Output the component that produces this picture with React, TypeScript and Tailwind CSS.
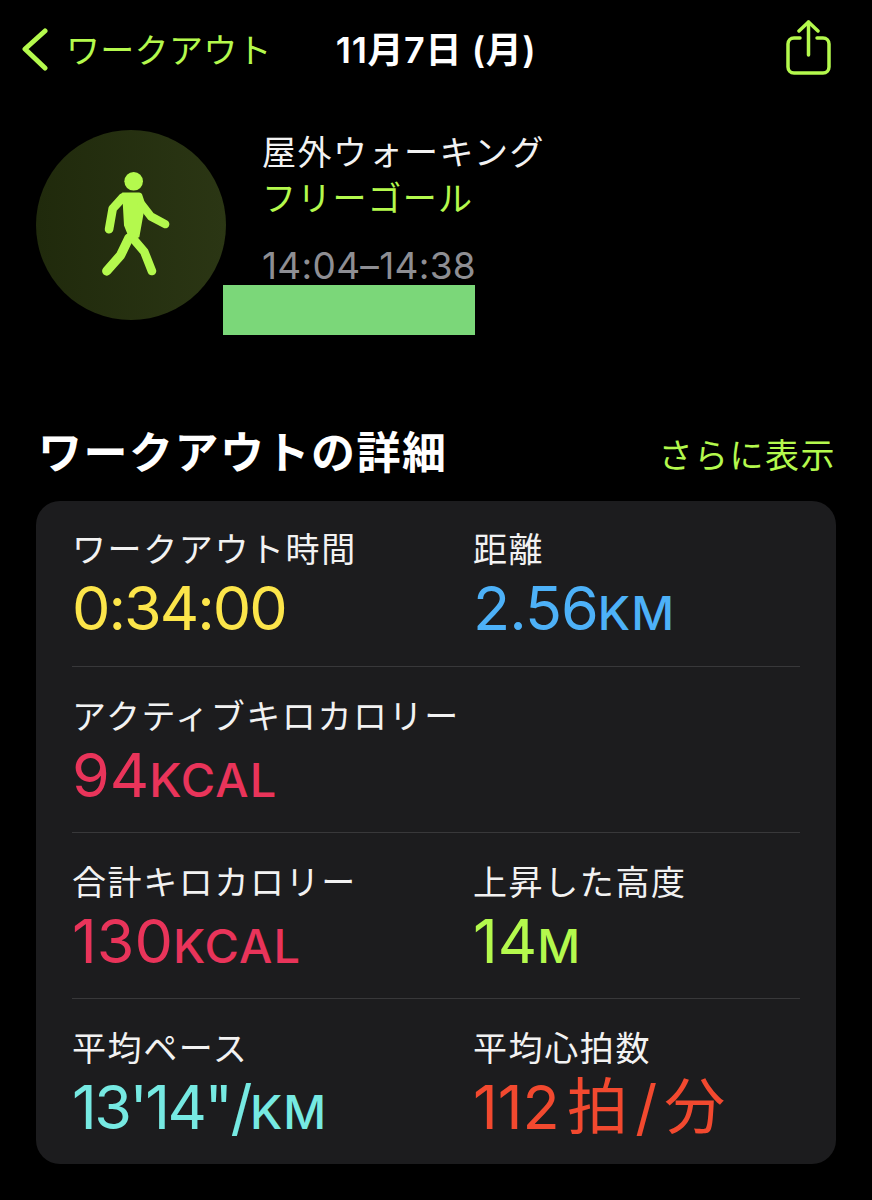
import React from "react";

const LIME = "#b4f94d";

const jp = "[font-family:'Noto_Sans_CJK_JP','Noto_Sans',sans-serif]";
const num = "[font-family:Inter,'Noto_Sans_CJK_JP',sans-serif]";

type Stat = {
  label: string;
  value: string;
  unit?: string;
  color: string;
  valueClass?: string;
};

const rows: Stat[][] = [
  [
    { label: "ワークアウト時間", value: "0:34:00", color: "text-[#fce54a]", valueClass: "tracking-[-2px]" },
    { label: "距離", value: "2.56", unit: "KM", color: "text-[#4db1f8]", valueClass: "tracking-[-1px]" },
  ],
  [{ label: "アクティブキロカロリー", value: "94", unit: "KCAL", color: "text-[#e9345a]" }],
  [
    { label: "合計キロカロリー", value: "130", unit: "KCAL", color: "text-[#e9345a]" },
    { label: "上昇した高度", value: "14", unit: "M", color: "text-[#b4f94d]" },
  ],
  [
    { label: "平均ペース", value: "13'14\"/", unit: "KM", color: "text-[#76e9e2]", valueClass: "tracking-[-2.5px]" },
    { label: "平均心拍数", value: "112 拍 / 分", color: "text-[#f2492f]", valueClass: "[word-spacing:-10px]" },
  ],
];

const WalkerIcon = () => (
  <svg width="80" height="115" viewBox="212 140 240 346" fill="none" stroke={LIME} strokeLinecap="round" strokeLinejoin="round">
    <circle cx="340" cy="180" r="28" fill={LIME} stroke="none" />
    <path d="M306 214h50q8 0 11 10l8 24-18 100-28 10-18-45-4-70-24 15z" fill={LIME} stroke="none" />
    <path d="M308 228 277 262 266 324" strokeWidth="26" />
    <path d="M364 250 392 286 435 309" strokeWidth="25" />
    <path d="M326 350 301 402 259 450" strokeWidth="28" />
    <path d="M338 352 372 392 395 450" strokeWidth="26" />
  </svg>
);

const ShareIcon = () => (
  <svg width="46" height="56" viewBox="0 0 46 56" fill="none" stroke={LIME} strokeWidth="3.500" strokeLinecap="round" strokeLinejoin="round">
    <path d="M14 18H8c-3.500 0-6 2.500-6 6v23c0 3.500 2.500 6 6 6h29c3.500 0 6-2.500 6-6V24c0-3.500-2.500-6-6-6h-6" />
    <path d="M22.500 35V2" />
    <path d="M13 11 22.500 2 32 11" />
  </svg>
);

const StatCell = ({ stat }: { stat: Stat }) => (
  <div className="min-w-0">
    <div className={`${jp} h-[40px] text-[34px] leading-[40px] tracking-[1.6px] whitespace-nowrap text-[#f2f2f2]`}>
      {stat.label}
    </div>
    <div className={`${stat.color} ${num} mt-[10px] h-[60px] leading-[60px] whitespace-nowrap`}>
      <span className={`text-[61px] ${stat.valueClass ?? ""}`}>{stat.value}</span>
      {stat.unit && <span className="text-[47px] font-medium tracking-[1px]">{stat.unit}</span>}
    </div>
  </div>
);

export default function App() {
  return (
    <div className={`${jp} h-[1200px] w-[872px] overflow-hidden bg-black text-white`}>
      {/* nav bar */}
      <div className="flex h-[100px] items-center pl-[22px] pr-[40px]">
        <svg width="26" height="44" viewBox="0 0 26 44" fill="none" stroke={LIME} strokeWidth="5" strokeLinecap="round" strokeLinejoin="round">
          <path d="M23 3 3 21l20 19" />
        </svg>
        <span className="-mt-[3px] ml-[18px] text-[34px] tracking-[0.3px] text-[#b4f94d]">ワークアウト</span>
        <span className={`${num} ml-[64px] text-[36px] leading-none font-semibold tracking-[0.6px]`}>11月7日 (月)</span>
        <div className="-mt-[4px] ml-auto">
          <ShareIcon />
        </div>
      </div>

      {/* workout summary */}
      <div className="relative mt-[30px] flex pl-[36px]">
        <div className="flex h-[190px] w-[190px] items-center justify-center rounded-full bg-gradient-to-r from-[#202a0c] to-[#2b3614]">
          <WalkerIcon />
        </div>
        <div className="ml-[36px]">
          <div className="-mt-[1px] text-[34px] leading-[44px] tracking-[1.500px] text-[#f2f2f2]">屋外ウォーキング</div>
          <div className="mt-[2px] text-[34px] leading-[44px] tracking-[1.2px] text-[#b4f94d]">フリーゴール</div>
          <div className={`${num} mt-[25px] text-[37px] leading-[44px] tracking-[0.3px] text-[#8e8e93]`}>14:04–14:38</div>
        </div>
        <div className="absolute left-[223px] top-[155px] h-[50px] w-[252px] bg-[#7bd779]" />
      </div>

      {/* details */}
      <div className="mt-[103px] flex items-center justify-between pl-[38px] pr-[36px]">
        <h2 className="text-[44px] leading-[54px] font-bold tracking-[1.5px]">ワークアウトの詳細</h2>
        <span className="mt-[7px] text-[34px] leading-[44px] tracking-[1.5px] text-[#b4f94d]">さらに表示</span>
      </div>

      <div className="mx-[36px] mt-[24px] h-[663px] rounded-[24px] bg-[#1c1c1e] px-[36px] pt-[27px]">
        {rows.map((row, i) => (
          <div
            key={i}
            className={
              i === 0
                ? "grid h-[139px] grid-cols-[401px_1fr] border-b border-[#38383a]"
                : i === rows.length - 1
                  ? "grid h-[166px] grid-cols-[401px_1fr] pt-[28px]"
                  : "grid h-[166px] grid-cols-[401px_1fr] border-b border-[#38383a] pt-[28px]"
            }
          >
            {row.map((stat) => (
              <StatCell key={stat.label} stat={stat} />
            ))}
          </div>
        ))}
      </div>
    </div>
  );
}
